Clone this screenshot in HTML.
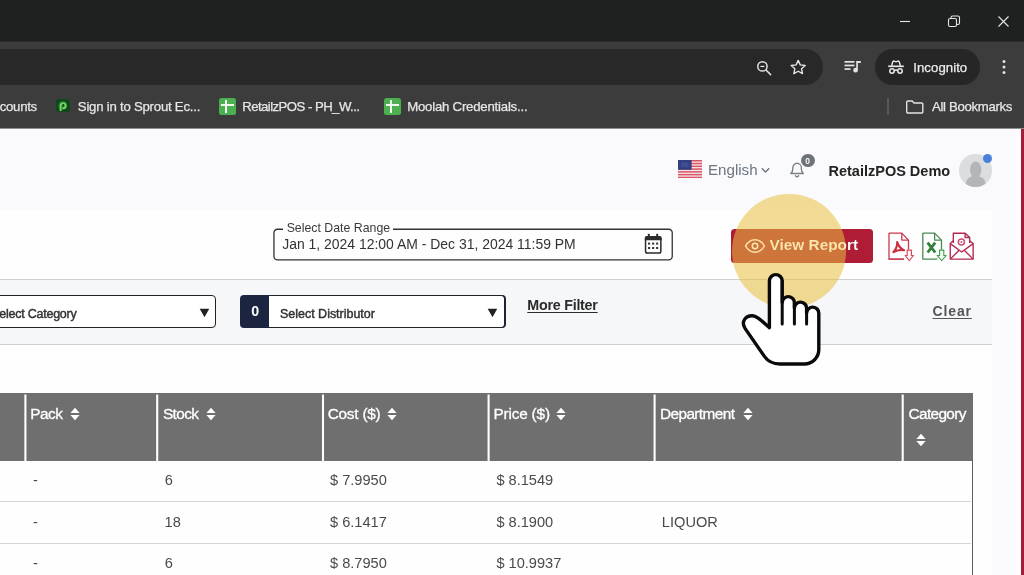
<!DOCTYPE html>
<html lang="en">
<head>
<meta charset="utf-8">
<title>RetailzPOS - Report</title>
<style>
*{box-sizing:border-box;margin:0;padding:0}
html,body{width:1024px;height:575px;overflow:hidden;background:#fafafc;font-family:"Liberation Sans",Arial,sans-serif;}
.abs{position:absolute}
#root{position:relative;width:1024px;height:575px;overflow:hidden;filter:blur(.45px)}
/* ---------- browser chrome ---------- */
#titlebar{left:0;top:0;width:1024px;height:42px;background:#1e211f;border-bottom:1px solid #2c2f2d}
#toolbar{left:0;top:42px;width:1024px;height:86px;background:#3c3c3c}
#omni{left:-40px;top:49px;width:863px;height:36px;border-radius:18px;background:#282828}
#incog{left:875px;top:49px;width:105px;height:36px;border-radius:18px;background:#262626}
.ctext{color:#e6e6e6;font-size:12px;white-space:nowrap;line-height:16px;-webkit-text-stroke:.25px #e6e6e6}
.bm{top:99px}
/* ---------- page ---------- */
#page{left:0;top:128px;width:1021px;height:447px;background:#fafafc}
#stripe{left:1021px;top:128px;width:3px;height:447px;background:#a31c38}
#card{left:0;top:210px;width:992px;height:365px;background:#fefefe}
.t{white-space:nowrap;position:absolute}
#filterrow{left:0;top:279px;width:992px;height:66px;background:#f6f7f9;border-top:1px solid #cfcfcf;border-bottom:1px solid #cfcfcf}
.sel{background:#fff;border:1px solid #222;border-radius:4px}
#thead{left:0;top:393px;width:973px;height:68px;background:#6f6f6f}
.vs{position:absolute;top:393px;width:2px;height:68px;background:#fff}
.th{-webkit-text-stroke:.3px #fff;color:#fff;font-size:15px;letter-spacing:-.35px;line-height:18px;top:405px}
.td{color:#4a4a4a;font-size:14.5px;line-height:18px}
.rl{position:absolute;left:0;width:971px;height:1px;background:#d4d4d4}
</style>
</head>
<body>
<div id="root">
<!-- browser chrome -->
<div id="titlebar" class="abs"></div>
<div id="toolbar" class="abs"></div>
<div id="omni" class="abs"></div>
<div id="incog" class="abs"></div>

<!-- window controls -->
<svg class="abs" style="left:895px;top:10px" width="120" height="24" viewBox="0 0 120 24" fill="none" stroke="#e6e6e6" stroke-width="1.1">
  <path d="M5 11.5h10"/>
  <rect x="53.5" y="8.5" width="8" height="8" rx="1.6"/>
  <path d="M56 8.3V7.6a1.6 1.6 0 0 1 1.6-1.6h5.3a1.6 1.6 0 0 1 1.6 1.6v5.3a1.6 1.6 0 0 1-1.6 1.6h-1"/>
  <path d="M103.500 6.500l10 10M113.500 6.500l-10 10"/>
</svg>
<!-- omnibox icons -->
<svg class="abs" style="left:754.500px;top:58.500px" width="18.600" height="18.600" viewBox="0 0 20 20" fill="none" stroke="#e3e3e3" stroke-width="1.6">
  <circle cx="8" cy="8" r="5"/><path d="M11.800 11.800l5 5" stroke-linecap="round"/><path d="M5.800 8h4.400" stroke-width="1.300"/>
</svg>
<svg class="abs" style="left:789px;top:58px" width="18.400" height="18.400" viewBox="0 0 20 20" fill="none" stroke="#e3e3e3" stroke-width="1.500" stroke-linejoin="round">
  <path d="M10 2.600l2.250 4.900 5.350.600-3.950 3.650 1.050 5.300L10 14.400l-4.700 2.650 1.050-5.300L2.400 8.100l5.350-.600z"/>
</svg>
<svg class="abs" style="left:843px;top:58px" width="20" height="18" viewBox="0 0 20 18" fill="#e3e3e3">
  <rect x="1.500" y="3" width="10" height="1.700"/><rect x="1.500" y="6.600" width="10" height="1.700"/><rect x="1.500" y="10.200" width="6" height="1.700"/>
  <path d="M13.200 3h4.600v1.900h-2.900v7.300a2.300 2.300 0 1 1-1.700-2.200z"/>
</svg>
<!-- incognito -->
<svg class="abs" style="left:887px;top:58px" width="18" height="18" viewBox="0 0 18 18" fill="none" stroke="#e8e8e8" stroke-width="1.500">
  <path d="M1.200 8.300h15.600" stroke-width="1.700"/>
  <path d="M4.600 7.800l1.200-4.100c.2-.6.700-.8 1.300-.6l1.400.5c.3.100.7.100 1 0l1.400-.5c.6-.2 1.100 0 1.300.6l1.200 4.100" fill="none" stroke-width="1.400"/>
  <circle cx="5" cy="13" r="2.200"/><circle cx="13" cy="13" r="2.200"/><path d="M7.200 12.600c1.100-.7 2.500-.7 3.600 0"/>
</svg>
<span class="t ctext" id="c_incog" style="left:913.27px;top:60.53px;font-size:13.20px;color:#efefef;letter-spacing:0.05px;line-height:1">Incognito</span>
<svg class="abs" style="left:1000px;top:58px" width="8" height="18" viewBox="0 0 8 18" fill="#e3e3e3">
  <circle cx="4" cy="3.500" r="1.500"/><circle cx="4" cy="9" r="1.500"/><circle cx="4" cy="14.500" r="1.500"/>
</svg>
<!-- bookmarks bar -->
<span class="t ctext bm" id="c_counts" style="left:-0.23px;top:100.13px;font-size:13.20px;letter-spacing:-0.30px;line-height:1">counts</span>
<div class="abs" style="left:56px;top:98.500px;width:13.500px;height:13.500px;border-radius:2.500px;background:#10471d"></div>
<svg class="abs" style="left:56px;top:98.500px" width="14" height="14" viewBox="0 0 14 14" fill="none">
  <circle cx="6.800" cy="6.500" r="4.600" fill="#2d8a35" opacity=".55"/>
  <path d="M4.600 11.200V6.800a2.500 2.500 0 1 1 2.500 2.500" stroke="#74d162" stroke-width="2" stroke-linecap="round"/>
  <circle cx="7.400" cy="5.700" r=".800" fill="#0d3a17"/>
</svg>
<span class="t ctext bm" id="c_sprout" style="left:77.84px;top:100.13px;font-size:13.20px;letter-spacing:-0.23px;line-height:1">Sign in to Sprout Ec...</span>
<div class="abs" style="left:219px;top:98px;width:17px;height:17px;border-radius:2.500px;background:#4caf50"></div>
<div class="abs" style="left:225px;top:100px;width:2px;height:13px;background:#f1f8f1"></div>
<div class="abs" style="left:221px;top:104px;width:13px;height:2px;background:#f1f8f1"></div>
<span class="t ctext bm" id="c_rpos" style="left:242.17px;top:100.13px;font-size:13.20px;letter-spacing:-0.55px;line-height:1">RetailzPOS - PH_W...</span>
<div class="abs" style="left:384px;top:98px;width:17px;height:17px;border-radius:2.500px;background:#4caf50"></div>
<div class="abs" style="left:390px;top:100px;width:2px;height:13px;background:#f1f8f1"></div>
<div class="abs" style="left:386px;top:104px;width:13px;height:2px;background:#f1f8f1"></div>
<span class="t ctext bm" id="c_moolah" style="left:407.17px;top:100.13px;font-size:13.20px;letter-spacing:-0.21px;line-height:1">Moolah Credentials...</span>
<div class="abs" style="left:886.500px;top:98px;width:2px;height:17px;background:#585858"></div>
<svg class="abs" style="left:905px;top:99px" width="20" height="16" viewBox="0 0 20 16" fill="none" stroke="#e3e3e3" stroke-width="1.400" stroke-linejoin="round">
  <path d="M1.700 3.200a1.200 1.200 0 0 1 1.200-1.200h4.300l1.800 2h7.600a1.200 1.200 0 0 1 1.200 1.200v7.600a1.200 1.200 0 0 1-1.200 1.200H2.900a1.200 1.200 0 0 1-1.200-1.200z"/>
</svg>
<span class="t ctext bm" id="c_allbm" style="left:932.00px;top:100.13px;font-size:13.20px;letter-spacing:-0.33px;line-height:1">All Bookmarks</span>
<!-- page -->
<div id="page" class="abs"></div>
<div id="stripe" class="abs"></div>
<div class="abs" style="left:0;top:128px;width:1024px;height:1px;background:#8e8e8f"></div>
<div class="abs" style="left:1016px;top:129px;width:5px;height:446px;background:#fffdfd"></div>
<div id="card" class="abs"></div>

<!-- header: language / bell / user -->
<svg class="abs" style="left:678px;top:160.100px" width="24.300" height="18.200" preserveAspectRatio="none" viewBox="0 0 25 18">
  <rect width="25" height="18" fill="#f4e9ea"/>
  <g fill="#dd5666"><rect y="0" width="25" height="1.500"/><rect y="2.750" width="25" height="1.500"/><rect y="5.500" width="25" height="1.500"/><rect y="8.250" width="25" height="1.500"/><rect y="11" width="25" height="1.500"/><rect y="13.750" width="25" height="1.500"/><rect y="16.500" width="25" height="1.500"/></g>
  <rect width="14" height="9.700" fill="#343f82"/><rect x="3" y="2.200" width="8" height="5" fill="#46569a" opacity=".6"/>
</svg>
<span class="t" id="p_eng" style="left:708.02px;top:162.41px;font-size:15.11px;line-height:1;color:#6c7580;letter-spacing:0.00px">English</span>
<svg class="abs" style="left:760px;top:165px" width="11" height="10" viewBox="0 0 11 10" fill="none" stroke="#6c7580" stroke-width="1.400"><path d="M1.800 3.300l3.700 3.600 3.700-3.600"/></svg>
<svg class="abs" style="left:789.300px;top:160.300px" width="16.500" height="19" preserveAspectRatio="none" viewBox="0 0 18 20" fill="none" stroke="#7b8087" stroke-width="1.500" stroke-linejoin="round">
  <path d="M2 14.300h13.600c-1.500-1.300-2.100-2.700-2.100-4.600V8.200a4.700 4.700 0 0 0-9.400 0v1.500c0 1.900-.600 3.300-2.100 4.600z"/>
  <path d="M7.200 16.500a1.700 1.700 0 0 0 3.200 0" stroke-linecap="round"/>
</svg>
<div class="abs" style="left:801px;top:153.500px;width:13.500px;height:13.500px;border-radius:50%;background:#6e7378"></div>
<span class="t" style="left:805.200px;top:155.500px;font-size:8.500px;line-height:10px;font-weight:bold;color:#f4f4f4">0</span>
<span class="t" id="p_user" style="left:828.49px;top:163.82px;font-size:14.50px;line-height:1;font-weight:bold;color:#232323;letter-spacing:0.00px">RetailzPOS Demo</span>
<div class="abs" style="left:959.300px;top:154.300px;width:32.400px;height:32.400px;border-radius:50%;overflow:hidden;background:#dcdddf">
<svg class="abs" style="left:-.300px;top:-.300px" width="34" height="34" viewBox="0 0 34 34" fill="#b4b5b8">
    <ellipse cx="16.700" cy="15.600" rx="5.700" ry="8.200"/>
    <path d="M13 19v3.400c-3.600 1-6.400 3.400-6.400 9.600v2h20.200v-2c0-6.200-2.800-8.600-6.400-9.600V19z"/>
</svg>
</div>
<div class="abs" style="left:982.700px;top:154.300px;width:9.200px;height:9.200px;border-radius:50%;background:#4a80d8"></div>
<!-- date range -->
<svg class="abs" style="left:270px;top:225px" width="406" height="40" viewBox="0 0 406 40"><rect x="3.950" y="4.250" width="398.300" height="30.700" rx="3.600" fill="#fefefe" stroke="#333" stroke-width="1.300"/></svg>
<div class="abs" style="left:283px;top:224px;width:110px;height:10px;background:#fefefe"></div>
<span class="t" id="p_dlabel" style="left:286.65px;top:221.66px;font-size:12.33px;line-height:1;color:#3a3a3a;letter-spacing:0.00px">Select Date Range</span>
<span class="t" id="p_date" style="left:282.28px;top:237.50px;font-size:13.94px;line-height:1;color:#333;letter-spacing:0.00px">Jan 1, 2024 12:00 AM - Dec 31, 2024 11:59 PM</span>
<svg class="abs" style="left:643px;top:232px" width="20" height="23" viewBox="0 0 20 23" fill="none">
  <rect x="2.550" y="4.900" width="15.300" height="16.100" rx="1.800" stroke="#2b2b2b" stroke-width="1.500"/>
  <path d="M1.800 8.200V6a1.900 1.900 0 0 1 1.900-1.900h13a1.900 1.900 0 0 1 1.900 1.900v2.200z" fill="#2b2b2b"/>
  <rect x="4.900" y="1.700" width="1.900" height="3.600" rx=".600" fill="#2b2b2b"/><rect x="13.200" y="1.700" width="1.900" height="3.600" rx=".600" fill="#2b2b2b"/>
  <g fill="#333"><rect x="5" y="10.600" width="2.100" height="2"/><rect x="9.100" y="10.600" width="2.100" height="2"/><rect x="13.100" y="10.600" width="2.100" height="2"/><rect x="5" y="15" width="2.100" height="2"/><rect x="9.100" y="15" width="2.100" height="2"/><rect x="13.100" y="15" width="2.100" height="2"/></g>
</svg>
<!-- view report button -->
<div class="abs" style="left:731px;top:229px;width:142px;height:34px;border-radius:3.500px;background:#ae1c36"></div>

<!-- export icons -->
<svg class="abs" style="left:886px;top:230.100px" width="30" height="33" preserveAspectRatio="none" viewBox="0 0 30 34" fill="none" stroke="#c9394f" stroke-width="1.300" stroke-linejoin="round">
  <path d="M3 3.200h12.800l6.700 7.200v9.800M17.500 30H3z" />
  <path d="M3 3.200V30h15"/>
  <path d="M15.800 3.200v7.200h6.700"/>
  <path d="M11.200 12.500c.9 3.200 2.600 6.300 6.800 8.300M11.200 12.500c.2 3.600-1.200 7.200-3.800 10.300M7.400 22.800c3.200-1.900 6.800-2.500 10.600-2" stroke="#cc2c3c" stroke-width="2.100" stroke-linecap="round"/>
  <path d="M21.200 20.700h4.200v5.600h2l-4.100 5.400-4.100-5.400h2z" fill="#fff5f5" stroke="#d64552" stroke-width="1.100"/>
</svg>
<svg class="abs" style="left:920px;top:230.100px" width="30" height="33" preserveAspectRatio="none" viewBox="0 0 30 34" fill="none" stroke="#4a8a52" stroke-width="1.300" stroke-linejoin="round">
  <path d="M2.800 3.200V30h14.500"/>
  <path d="M2.800 3.200h11.800l6.900 7.200v9.800"/>
  <path d="M14.600 3.200v7.200h6.900"/>
  <path d="M7.600 13l7.600 10.200M15.200 13L7.600 23.200" stroke="#2f8038" stroke-width="2.700"/>
  <path d="M19.600 20.700h4.200v5.600h2.400l-4.500 5.400-4.500-5.400h2.400z" fill="#f3fbf3" stroke="#3f9a48" stroke-width="1.100"/>
</svg>
<svg class="abs" style="left:948px;top:229.500px" width="27.600" height="33" preserveAspectRatio="none" viewBox="0 0 28 34" fill="none" stroke="#b32a50" stroke-width="1.400" stroke-linejoin="round">
  <path d="M5.400 13.500V3.300h12l4.600 4.400v5.800"/>
  <path d="M17.400 3.300v4.400H22"/>
  <path d="M5.400 11.200L2.300 14v16h23.200V14l-3.500-2.800"/>
  <path d="M2.300 14l11.600 8.600L25.500 14"/>
  <path d="M2.300 30l9-9.200M25.500 30l-9-9.200"/>
  <circle cx="13.600" cy="12.300" r="3.100" stroke="#cf4f74" stroke-width="1.500"/>
  <circle cx="13.600" cy="12.300" r="1" fill="#cf4f74" stroke="none"/>
</svg>
<div id="filterrow" class="abs"></div>
<!-- filter row -->
<div class="abs sel" style="left:-60px;top:295px;width:276px;height:33px"></div>
<span class="t" id="f_cat" style="-webkit-text-stroke:.45px #333;left:-8.73px;top:308.22px;font-size:12.50px;line-height:1;color:#333;letter-spacing:-0.25px">Select Category</span>
<svg class="abs" style="left:198.500px;top:307.500px" width="11" height="10" viewBox="0 0 11 10"><path d="M.700 .800h9.600L5.500 9.200z" fill="#222"/></svg>
<div class="abs" style="left:239.500px;top:295px;width:266px;height:33px;border-radius:4px;background:#1c2540"></div>
<div class="abs" style="left:269px;top:295px;width:236px;height:33px;border:1px solid #222;border-left:0;border-radius:0 4px 4px 0;background:#fff"></div>
<span class="t" id="f_zero" style="left:251.26px;top:303.55px;font-size:14.24px;line-height:1;font-weight:bold;color:#fff;letter-spacing:0.00px">0</span>
<span class="t" id="f_dist" style="-webkit-text-stroke:.45px #333;left:280.05px;top:307.72px;font-size:12.50px;line-height:1;color:#333;letter-spacing:-0.02px">Select Distributor</span>
<svg class="abs" style="left:486.700px;top:307.500px" width="11" height="10" viewBox="0 0 11 10"><path d="M.700 .800h9.600L5.500 9.200z" fill="#222"/></svg>
<span class="t" id="f_more" style="left:527.31px;top:297.50px;font-size:14.30px;line-height:1;font-weight:bold;color:#2b2b2b;text-decoration:underline;text-underline-offset:2px;letter-spacing:-0.25px">More Filter</span>
<span class="t" id="f_clear" style="left:932.56px;top:304.05px;font-size:14.00px;line-height:1;font-weight:bold;color:#555;text-decoration:underline;text-underline-offset:2px;letter-spacing:0.85px">Clear</span>


<!-- table -->
<div id="thead" class="abs"></div>
<svg class="abs" style="left:0;top:393px" width="980" height="68" viewBox="0 0 980 68" fill="none" stroke="#fff" stroke-width="2.100"><path d="M25.4 1.500V68"/><path d="M157.2 1.500V68"/><path d="M323.0 1.500V68"/><path d="M488.6 1.500V68"/><path d="M654.6 1.500V68"/><path d="M902.7 1.500V68"/></svg>
<span class="t th" id="h_pack" style="left:30.20px;top:405.66px;font-size:15.40px;letter-spacing:-0.46px;line-height:1">Pack</span><svg class="abs" style="left:70.400px;top:407.200px" width="10" height="14" viewBox="0 0 10 14" fill="#fff"><path d="M5 .800L9.600 6H.4zM5 13.200L.4 8h9.200z"/></svg>
<span class="t th" id="h_stock" style="left:162.92px;top:405.66px;font-size:15.40px;letter-spacing:-0.61px;line-height:1">Stock</span><svg class="abs" style="left:206.300px;top:407.200px" width="10" height="14" viewBox="0 0 10 14" fill="#fff"><path d="M5 .800L9.600 6H.4zM5 13.200L.4 8h9.200z"/></svg>
<span class="t th" id="h_cost" style="left:327.68px;top:405.66px;font-size:15.40px;letter-spacing:-0.24px;line-height:1">Cost ($)</span><svg class="abs" style="left:386.700px;top:407.200px" width="10" height="14" viewBox="0 0 10 14" fill="#fff"><path d="M5 .800L9.600 6H.4zM5 13.200L.4 8h9.200z"/></svg>
<span class="t th" id="h_price" style="left:493.40px;top:405.66px;font-size:15.40px;letter-spacing:-0.19px;line-height:1">Price ($)</span><svg class="abs" style="left:555.800px;top:407.200px" width="10" height="14" viewBox="0 0 10 14" fill="#fff"><path d="M5 .800L9.600 6H.4zM5 13.200L.4 8h9.200z"/></svg>
<span class="t th" id="h_dept" style="left:660.00px;top:405.66px;font-size:15.40px;letter-spacing:-0.61px;line-height:1">Department</span><svg class="abs" style="left:743px;top:407.200px" width="10" height="14" viewBox="0 0 10 14" fill="#fff"><path d="M5 .800L9.600 6H.4zM5 13.200L.4 8h9.200z"/></svg>
<span class="t th" id="h_cat" style="left:908.58px;top:405.66px;font-size:15.40px;letter-spacing:-0.67px;line-height:1">Category</span><svg class="abs" style="left:915.700px;top:433.200px" width="10" height="14" viewBox="0 0 10 14" fill="#fff"><path d="M5 .800L9.600 6H.4zM5 13.200L.4 8h9.200z"/></svg>
<div class="abs" style="left:972px;top:460px;width:1px;height:115px;background:#5e5e5e"></div>
<div class="rl" style="top:501px"></div><div class="rl" style="top:543px"></div>
<span class="t td" id="r1a" style="left:33.04px;top:472.64px;font-size:14.60px;letter-spacing:0.00px;line-height:1">-</span><span class="t td" id="r1b" style="left:164.82px;top:472.64px;font-size:14.60px;letter-spacing:0.00px;line-height:1">6</span><span class="t td" id="r1c" style="left:330.00px;top:472.64px;font-size:14.60px;letter-spacing:0.00px;line-height:1">$ 7.9950</span><span class="t td" id="r1d" style="left:496.40px;top:472.64px;font-size:14.60px;letter-spacing:0.00px;line-height:1">$ 8.1549</span>
<span class="t td" id="r2a" style="left:33.04px;top:514.94px;font-size:14.60px;letter-spacing:0.00px;line-height:1">-</span><span class="t td" id="r2b" style="left:164.59px;top:514.94px;font-size:14.60px;letter-spacing:0.00px;line-height:1">18</span><span class="t td" id="r2c" style="left:330.00px;top:514.94px;font-size:14.60px;letter-spacing:0.00px;line-height:1">$ 6.1417</span><span class="t td" id="r2d" style="left:496.40px;top:514.94px;font-size:14.60px;letter-spacing:0.00px;line-height:1">$ 8.1900</span><span class="t td" id="r2e" style="left:661.86px;top:514.94px;font-size:14.60px;letter-spacing:0.00px;line-height:1">LIQUOR</span>
<span class="t td" id="r3a" style="left:33.04px;top:556.24px;font-size:14.60px;letter-spacing:0.00px;line-height:1">-</span><span class="t td" id="r3b" style="left:164.82px;top:556.24px;font-size:14.60px;letter-spacing:0.00px;line-height:1">6</span><span class="t td" id="r3c" style="left:330.00px;top:556.24px;font-size:14.60px;letter-spacing:0.00px;line-height:1">$ 8.7950</span><span class="t td" id="r3d" style="left:496.40px;top:556.24px;font-size:14.60px;letter-spacing:0.00px;line-height:1">$ 10.9937</span>

<!-- click highlight + hand cursor -->
<div class="abs" style="left:731.500px;top:193.500px;width:114px;height:114px;border-radius:50%;background:rgba(232,192,62,.55)"></div>
<svg class="abs" style="left:744px;top:236px" width="22" height="20" viewBox="0 0 22 20" fill="none" stroke="#fbe7b0" stroke-width="1.500">
  <path d="M1.500 10c2.300-4 5.600-6.200 9.500-6.200s7.200 2.200 9.500 6.200c-2.300 4-5.600 6.200-9.500 6.200S3.800 14 1.500 10z" stroke-linejoin="round"/>
  <circle cx="11" cy="10" r="2.700"/>
</svg>
<span class="t" id="p_view" style="left:769.60px;top:236.59px;font-size:15.36px;line-height:1;font-weight:bold;color:transparent;background:radial-gradient(circle 58px at 18.900px 13.900px,#fbe7b0 0,#fbe7b0 56.500px,#fff 57.500px);-webkit-background-clip:text;background-clip:text;letter-spacing:0.00px">View Report</span>
<svg class="abs" style="left:730px;top:260px" width="110" height="115" viewBox="0 0 550 575">
  <path d="M197 338V105a32 32 0 0 1 64 0V212a30.500 30.500 0 0 1 61 3V240a30.500 30.500 0 0 1 61 2V265a30.500 30.500 0 0 1 61 2V448a72 72 0 0 1-72 72H250C210 520 188 505 172 482L76 343C52 306 80 278 112 279 132 280 142 290 197 338z" fill="#fff" stroke="#0a0a0a" stroke-width="17" stroke-linejoin="round"/>
  <path d="M261 105V320M322 215V320M383 242V320" fill="none" stroke="#0a0a0a" stroke-width="15" stroke-linecap="round"/>
</svg>
</div>
</body>
</html>
